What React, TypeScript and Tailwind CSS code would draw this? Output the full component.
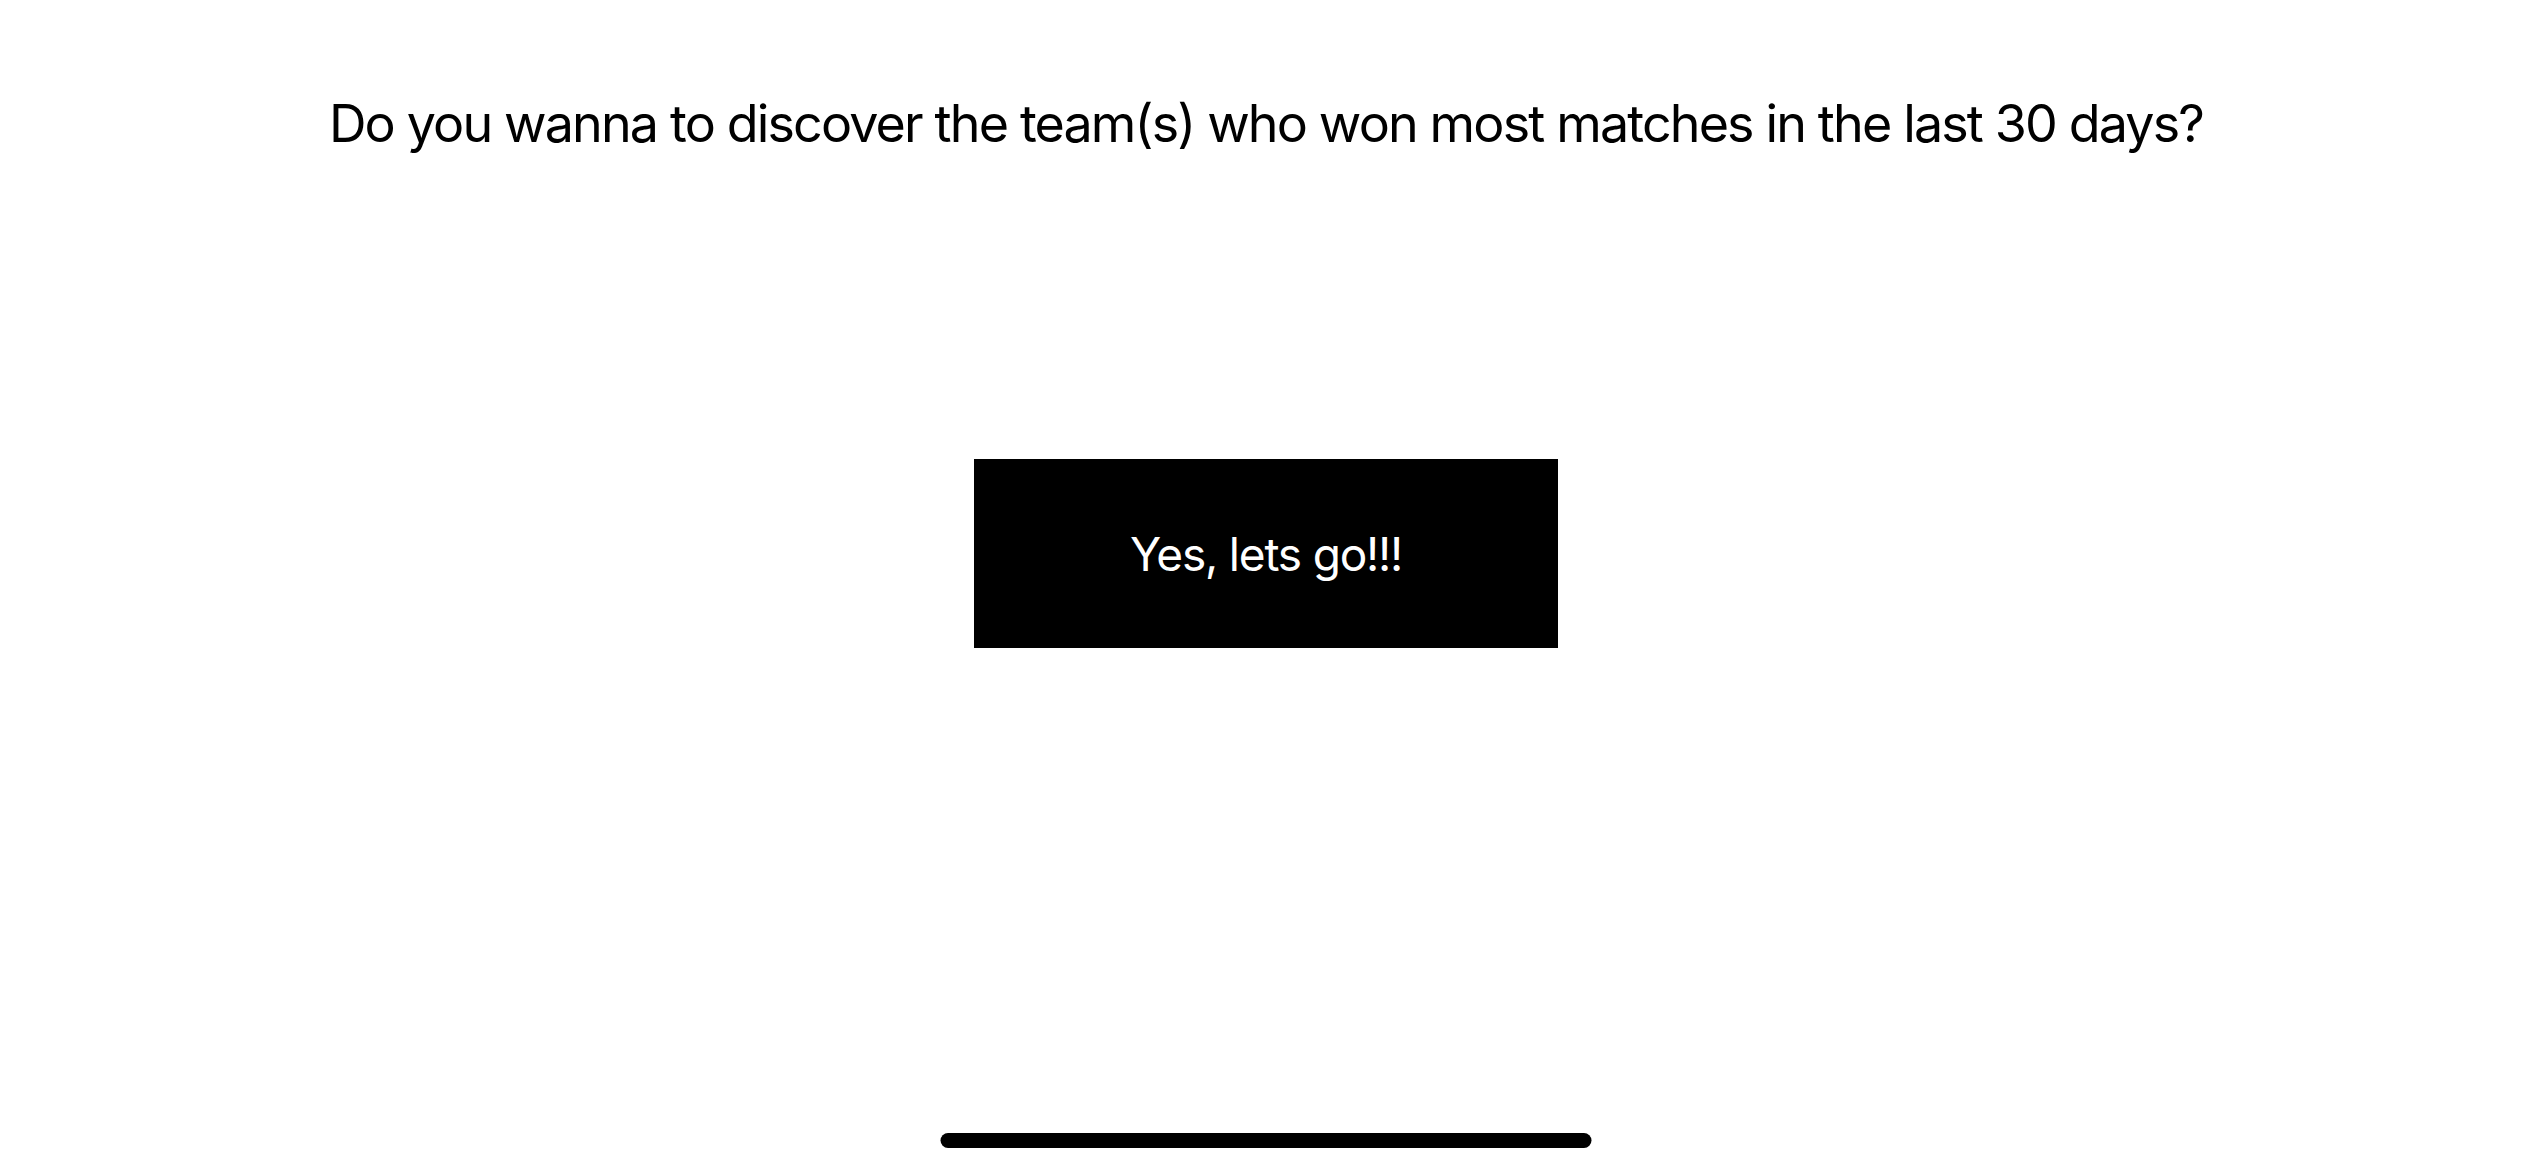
export default function App() {
  return (
    <div
      className="relative flex h-[1170px] w-[2532px] flex-col items-center bg-white text-black"
      style={{ fontFamily: 'Inter, "Noto Sans", sans-serif' }}
    >
      <h1 className="mt-[92px] text-[52px] leading-[64px] font-normal tracking-[-1.85px]">
        Do you wanna to discover the team(s) who won most matches in the last 30 days?
      </h1>

      <button className="mt-[303px] flex h-[189px] w-[584px] items-center justify-center bg-black pt-[2px] text-[46px] tracking-[-1.2px] text-white">
        Yes, lets go!!!
      </button>

      {/* home indicator */}
      <div className="absolute bottom-[22px] left-1/2 h-[15px] w-[651px] -translate-x-1/2 rounded-full bg-black" />
    </div>
  );
}
